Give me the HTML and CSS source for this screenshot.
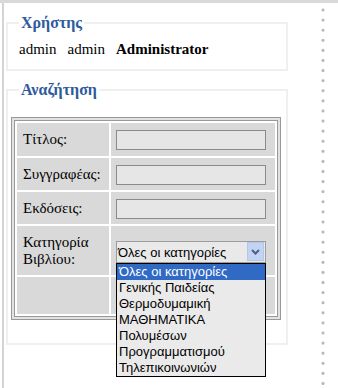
FILE: index.html
```html
<!DOCTYPE html>
<html lang="el">
<head>
<meta charset="utf-8">
<title>Αναζήτηση</title>
<link rel="stylesheet" href="styles.css">
</head>
<body>
<div class="topbar"></div>
<div class="page">
  <div class="main">
    <fieldset class="box box-user">
      <legend>Χρήστης</legend>
      <div class="userline"><span>admin</span><span>admin</span><b class="role">Administrator</b></div>
    </fieldset>
    <fieldset class="box box-search">
      <legend>Αναζήτηση</legend>
      <div class="frame">
        <table class="form">
          <tr class="r1">
            <td class="lbl">Τίτλος:</td>
            <td class="fld"><div class="input"></div></td>
          </tr>
          <tr class="r2">
            <td class="lbl">Συγγραφέας:</td>
            <td class="fld"><div class="input"></div></td>
          </tr>
          <tr class="r2">
            <td class="lbl">Εκδόσεις:</td>
            <td class="fld"><div class="input"></div></td>
          </tr>
          <tr class="r4">
            <td class="lbl">Κατηγορία<br>Βιβλίου:</td>
            <td class="fld">
              <div class="select-wrap">
                <div class="select">
                  <span class="select-text">Όλες οι κατηγορίες</span>
                  <span class="select-btn">
                    <svg width="9" height="6" viewBox="0 0 9 6"><path d="M1 1 L4.5 4.5 L8 1" fill="none" stroke="#4d6185" stroke-width="2"/></svg>
                  </span>
                </div>
                <ul class="dropdown">
                  <li class="sel">Όλες οι κατηγορίες</li>
                  <li>Γενικής Παιδείας</li>
                  <li>Θερμοδυμαμική</li>
                  <li>ΜΑΘΗΜΑΤΙΚΑ</li>
                  <li>Πολυμέσων</li>
                  <li>Προγραμματισμού</li>
                  <li>Τηλεπικοινωνιών</li>
                </ul>
              </div>
            </td>
          </tr>
          <tr class="r5">
            <td class="lbl"></td>
            <td class="fld"></td>
          </tr>
        </table>
      </div>
    </fieldset>
  </div>
  <div class="dots"></div>
</div>
</body>
</html>
```
FILE: styles.css
```css
html, body {
  margin: 0;
  padding: 0;
  background: #ffffff;
}
body {
  font-family: "Liberation Serif", "Times New Roman", serif;
  font-size: 15px;
  color: #000;
  width: 338px;
  height: 388px;
  overflow: hidden;
}
.topbar {
  height: 3px;
  background: #d9d9d9;
}
.page {
  display: flex;
  margin-left: 2px;
  border-left: 2px solid #d4d4d4;
  height: 385px;
}
.main {
  width: 282px;
  padding-left: 2px;
  padding-top: 11px;
}
.box {
  margin: 0;
  padding: 0;
  border: 2px solid #efefef;
  min-width: 0;
}
.box legend {
  margin-left: 11px;
  padding: 0 2px;
  font-family: "Liberation Serif", "Times New Roman", serif;
  font-weight: bold;
  font-size: 16px;
  line-height: 17px;
  color: #2f5b9c;
}
.userline {
  margin: 10px 11px 11px;
  line-height: 17px;
  display: flex;
  gap: 11px;
}
.role {
  font-family: "Liberation Serif", "Times New Roman", serif;
  font-weight: bold;
}
.box-search {
  margin-top: 10px;
}
.frame {
  margin: 19px 5px 23px 3px;
  border: 1px solid #999999;
  padding: 2px;
  background: #e2e2e2;
}
.form {
  border: 1px solid #999999;
  border-spacing: 2px;
  background: #ffffff;
  width: 100%;
}
.form td {
  padding: 0;
  background: #d9d9d9;
  vertical-align: middle;
}
.lbl {
  width: 86px;
  padding-left: 6px !important;
  line-height: 17px;
}
.fld {
  padding-left: 5px !important;
}
.r1 td { height: 33px; }
.r2 td { height: 32px; }
.r4 td { height: 49px; }
.r5 td { height: 37px; }
.input {
  width: 148px;
  height: 18px;
  border: 1px solid #8a8a8a;
  background: #e6e6e6;
  margin-top: 1px;
}
.select-wrap {
  position: relative;
  width: 150px;
  margin-top: 2px;
}
.select {
  height: 20px;
  border: 1px solid #9c9c9c;
  background: #e9e9e9;
  display: flex;
  align-items: center;
  justify-content: space-between;
  font-family: "Liberation Sans", Arial, sans-serif;
  font-size: 13px;
}
.select-text {
  padding-left: 1px;
  padding-top: 2px;
}
.select-btn {
  width: 15px;
  height: 17px;
  margin-right: 1px;
  background: #c3d3f3;
  border: 1px solid #b5c6e6;
  display: flex;
  align-items: center;
  justify-content: center;
}
.dropdown {
  position: absolute;
  top: 100%;
  left: 0;
  width: 148px;
  margin: 0;
  padding: 0;
  list-style: none;
  border: 1px solid #000000;
  background: #eaeaea;
  font-family: "Liberation Sans", Arial, sans-serif;
  font-size: 13px;
  z-index: 5;
}
.dropdown li {
  height: 16px;
  line-height: 16px;
  padding-left: 2px;
  white-space: nowrap;
}
.dropdown li.sel {
  background: #316ac5;
  color: #ffffff;
}
.dots {
  width: 4px;
  margin-left: 33px;
  margin-top: 2px;
  background-image: radial-gradient(circle at 2px 5px, #b8b8b8 1.2px, transparent 1.9px);
  background-size: 4px 10.1px;
  background-repeat: repeat-y;
}
```
